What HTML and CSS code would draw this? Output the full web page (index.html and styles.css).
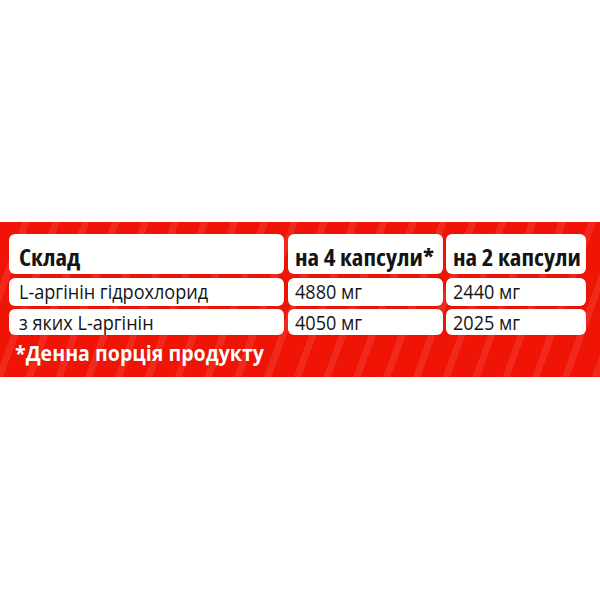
FILE: index.html
```html
<!DOCTYPE html>
<html>
<head>
<meta charset="utf-8">
<link rel="stylesheet" href="styles.css">
</head>
<body>
<div class="page">
  <div class="band">
    <div class="grid">
      <div class="cell head c1"><span class="t">Склад</span></div>
      <div class="cell head c2"><span class="t">на 4 капсули*</span></div>
      <div class="cell head c3"><span class="t">на 2 капсули</span></div>
      <div class="cell r2 c1"><span class="t">L-аргінін гідрохлорид</span></div>
      <div class="cell r2 c2"><span class="t">4880 мг</span></div>
      <div class="cell r2 c3"><span class="t">2440 мг</span></div>
      <div class="cell r3 c1"><span class="t">з яких L-аргінін</span></div>
      <div class="cell r3 c2"><span class="t">4050 мг</span></div>
      <div class="cell r3 c3"><span class="t">2025 мг</span></div>
    </div>
    <div class="note"><span class="t">*Денна порція продукту</span></div>
  </div>
</div>
</body>
</html>
```
FILE: styles.css
```css
html, body {
  margin: 0;
  padding: 0;
  background: #ffffff;
}
.page {
  width: 600px;
  height: 600px;
  padding-top: 222px;
  box-sizing: border-box;
}
.band {
  height: 155px;
  box-sizing: border-box;
  padding: 12px 14px 0 9px;
  background-color: #ef1406;
  background-image: repeating-linear-gradient(110deg, rgba(255,255,255,0) 0px, rgba(255,255,255,0) 21px, rgba(255,255,255,0.09) 21px, rgba(255,255,255,0.09) 28px);
  font-family: "Open Sans", "Liberation Sans", sans-serif;
}
.grid {
  display: grid;
  grid-template-columns: 275px 155px 140px;
  grid-template-rows: 40px 28px 26px;
  column-gap: 3.5px;
  row-gap: 3.5px;
}
.cell {
  background: #ffffff;
  border-radius: 6px;
  color: #141414;
  display: flex;
  align-items: center;
  font-size: 20px;
  font-stretch: 95%;
  white-space: nowrap;
  box-shadow: 0 0 1px rgba(0,0,0,0.25);
  box-sizing: border-box;
}
.t {
  display: inline-block;
  transform-origin: left center;
  transform: scaleX(0.904);
}
.head {
  font-weight: bold;
  font-size: 23px;
  font-stretch: 75%;
  padding-top: 6px;
}
.head .t {
  transform: scaleX(1.087);
}
.c1 { padding-left: 10px; }
.c2, .c3 { padding-left: 7px; }
.note {
  color: #ffffff;
  font-weight: bold;
  font-size: 21px;
  font-stretch: 90%;
  margin-top: 4px;
  padding-left: 6px;
  text-shadow: 0 0 1px rgba(0,0,0,0.2);
}
.note .t {
  transform: scaleX(0.932);
}
```
